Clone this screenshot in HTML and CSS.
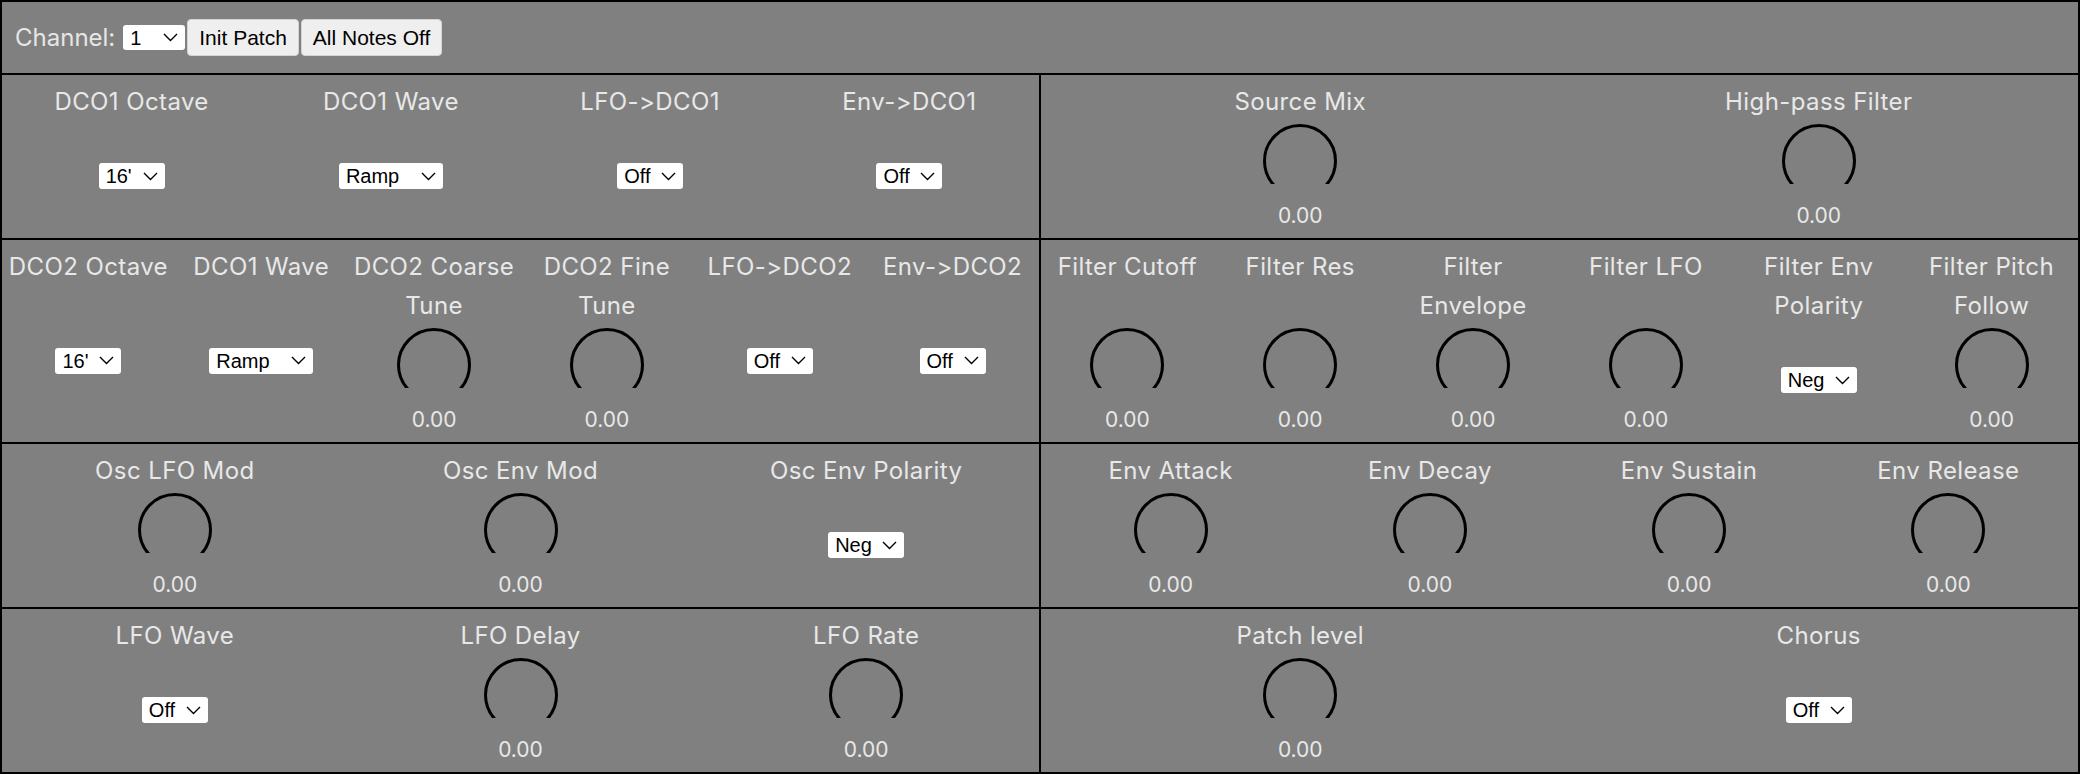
FILE: index.html
```html
<!DOCTYPE html>
<html lang="en">
<head>
    <meta charset="UTF-8">
    <meta name="viewport" content="width=device-width, initial-scale=1.0">
    <title>Synth Patch Editor</title>
    <link rel="stylesheet" href="styles.css">
</head>
<body>
    <div class="synth">
        <div class="topbar">
            <label for="channel">Channel:</label>
            <select id="channel" class="sel">
                <option>1</option><option>2</option><option>3</option><option>4</option>
                <option>5</option><option>6</option><option>7</option><option>8</option>
                <option>9</option><option>10</option><option>11</option><option>12</option>
                <option>13</option><option>14</option><option>15</option><option>16</option>
            </select>
            <button type="button" id="initPatch">Init Patch</button>
            <button type="button" id="allNotesOff">All Notes Off</button>
        </div>

        <div class="panels">
            <!-- row 1 -->
            <div class="section">
                <div class="control">
                    <div class="name">DCO1 Octave</div>
                    <select class="sel"><option>16'</option><option>8'</option><option>4'</option></select>
                    <span class="value"></span>
                </div>
                <div class="control">
                    <div class="name">DCO1 Wave</div>
                    <select class="sel"><option>Ramp</option><option>Pulse</option><option>Square</option></select>
                    <span class="value"></span>
                </div>
                <div class="control">
                    <div class="name">LFO-&gt;DCO1</div>
                    <select class="sel"><option>Off</option><option>On</option></select>
                    <span class="value"></span>
                </div>
                <div class="control">
                    <div class="name">Env-&gt;DCO1</div>
                    <select class="sel"><option>Off</option><option>On</option></select>
                    <span class="value"></span>
                </div>
            </div>
            <div class="section">
                <div class="control">
                    <div class="name">Source Mix</div>
                    <div class="knob-box">
                        <svg class="knob" viewBox="0 0 74 60"><circle cx="37" cy="37" r="35.5"/></svg>
                        <span class="value">0.00</span>
                    </div>
                </div>
                <div class="control">
                    <div class="name">High-pass Filter</div>
                    <div class="knob-box">
                        <svg class="knob" viewBox="0 0 74 60"><circle cx="37" cy="37" r="35.5"/></svg>
                        <span class="value">0.00</span>
                    </div>
                </div>
            </div>

            <!-- row 2 -->
            <div class="section">
                <div class="control">
                    <div class="name">DCO2 Octave</div>
                    <select class="sel"><option>16'</option><option>8'</option><option>4'</option></select>
                    <span class="value"></span>
                </div>
                <div class="control">
                    <div class="name">DCO1 Wave</div>
                    <select class="sel"><option>Ramp</option><option>Pulse</option><option>Square</option></select>
                    <span class="value"></span>
                </div>
                <div class="control">
                    <div class="name">DCO2 Coarse Tune</div>
                    <div class="knob-box">
                        <svg class="knob" viewBox="0 0 74 60"><circle cx="37" cy="37" r="35.5"/></svg>
                        <span class="value">0.00</span>
                    </div>
                </div>
                <div class="control">
                    <div class="name">DCO2 Fine Tune</div>
                    <div class="knob-box">
                        <svg class="knob" viewBox="0 0 74 60"><circle cx="37" cy="37" r="35.5"/></svg>
                        <span class="value">0.00</span>
                    </div>
                </div>
                <div class="control">
                    <div class="name">LFO-&gt;DCO2</div>
                    <select class="sel"><option>Off</option><option>On</option></select>
                    <span class="value"></span>
                </div>
                <div class="control">
                    <div class="name">Env-&gt;DCO2</div>
                    <select class="sel"><option>Off</option><option>On</option></select>
                    <span class="value"></span>
                </div>
            </div>
            <div class="section">
                <div class="control">
                    <div class="name">Filter Cutoff</div>
                    <div class="knob-box">
                        <svg class="knob" viewBox="0 0 74 60"><circle cx="37" cy="37" r="35.5"/></svg>
                        <span class="value">0.00</span>
                    </div>
                </div>
                <div class="control">
                    <div class="name">Filter Res</div>
                    <div class="knob-box">
                        <svg class="knob" viewBox="0 0 74 60"><circle cx="37" cy="37" r="35.5"/></svg>
                        <span class="value">0.00</span>
                    </div>
                </div>
                <div class="control">
                    <div class="name">Filter Envelope</div>
                    <div class="knob-box">
                        <svg class="knob" viewBox="0 0 74 60"><circle cx="37" cy="37" r="35.5"/></svg>
                        <span class="value">0.00</span>
                    </div>
                </div>
                <div class="control">
                    <div class="name">Filter LFO</div>
                    <div class="knob-box">
                        <svg class="knob" viewBox="0 0 74 60"><circle cx="37" cy="37" r="35.5"/></svg>
                        <span class="value">0.00</span>
                    </div>
                </div>
                <div class="control">
                    <div class="name">Filter Env Polarity</div>
                    <select class="sel"><option>Neg</option><option>Pos</option></select>
                    <span class="value"></span>
                </div>
                <div class="control">
                    <div class="name">Filter Pitch Follow</div>
                    <div class="knob-box">
                        <svg class="knob" viewBox="0 0 74 60"><circle cx="37" cy="37" r="35.5"/></svg>
                        <span class="value">0.00</span>
                    </div>
                </div>
            </div>

            <!-- row 3 -->
            <div class="section">
                <div class="control">
                    <div class="name">Osc LFO Mod</div>
                    <div class="knob-box">
                        <svg class="knob" viewBox="0 0 74 60"><circle cx="37" cy="37" r="35.5"/></svg>
                        <span class="value">0.00</span>
                    </div>
                </div>
                <div class="control">
                    <div class="name">Osc Env Mod</div>
                    <div class="knob-box">
                        <svg class="knob" viewBox="0 0 74 60"><circle cx="37" cy="37" r="35.5"/></svg>
                        <span class="value">0.00</span>
                    </div>
                </div>
                <div class="control">
                    <div class="name">Osc Env Polarity</div>
                    <select class="sel"><option>Neg</option><option>Pos</option></select>
                    <span class="value"></span>
                </div>
            </div>
            <div class="section">
                <div class="control">
                    <div class="name">Env Attack</div>
                    <div class="knob-box">
                        <svg class="knob" viewBox="0 0 74 60"><circle cx="37" cy="37" r="35.5"/></svg>
                        <span class="value">0.00</span>
                    </div>
                </div>
                <div class="control">
                    <div class="name">Env Decay</div>
                    <div class="knob-box">
                        <svg class="knob" viewBox="0 0 74 60"><circle cx="37" cy="37" r="35.5"/></svg>
                        <span class="value">0.00</span>
                    </div>
                </div>
                <div class="control">
                    <div class="name">Env Sustain</div>
                    <div class="knob-box">
                        <svg class="knob" viewBox="0 0 74 60"><circle cx="37" cy="37" r="35.5"/></svg>
                        <span class="value">0.00</span>
                    </div>
                </div>
                <div class="control">
                    <div class="name">Env Release</div>
                    <div class="knob-box">
                        <svg class="knob" viewBox="0 0 74 60"><circle cx="37" cy="37" r="35.5"/></svg>
                        <span class="value">0.00</span>
                    </div>
                </div>
            </div>

            <!-- row 4 -->
            <div class="section">
                <div class="control">
                    <div class="name">LFO Wave</div>
                    <select class="sel"><option>Off</option><option>Tri</option><option>Sq</option></select>
                    <span class="value"></span>
                </div>
                <div class="control">
                    <div class="name">LFO Delay</div>
                    <div class="knob-box">
                        <svg class="knob" viewBox="0 0 74 60"><circle cx="37" cy="37" r="35.5"/></svg>
                        <span class="value">0.00</span>
                    </div>
                </div>
                <div class="control">
                    <div class="name">LFO Rate</div>
                    <div class="knob-box">
                        <svg class="knob" viewBox="0 0 74 60"><circle cx="37" cy="37" r="35.5"/></svg>
                        <span class="value">0.00</span>
                    </div>
                </div>
            </div>
            <div class="section">
                <div class="control">
                    <div class="name">Patch level</div>
                    <div class="knob-box">
                        <svg class="knob" viewBox="0 0 74 60"><circle cx="37" cy="37" r="35.5"/></svg>
                        <span class="value">0.00</span>
                    </div>
                </div>
                <div class="control">
                    <div class="name">Chorus</div>
                    <select class="sel"><option>Off</option><option>I</option><option>II</option></select>
                    <span class="value"></span>
                </div>
            </div>
        </div>
    </div>
</body>
</html>
```

FILE: styles.css
```css
body {
    margin: 0;
    font-family: Inter, "Noto Sans", sans-serif;
    font-feature-settings: "calt" 0;
    font-variant-ligatures: none;
}
.synth {
    border: 2px solid #000;
    background-color: gray;
}
.topbar {
    height: 71px;
    display: flex;
    align-items: center;
    padding-left: 13px;
    border-bottom: 2px solid #000;
}
.topbar label {
    font-size: 24px;
    color: #e6e6e6;
    margin-right: 8px;
}
.topbar button {
    font: 21px "Liberation Sans", Arial, sans-serif;
    color: #000;
    height: 37px;
    padding: 0 11px;
    margin-left: 2px;
    background-color: #efefef;
    border: 1px solid #d4d4d4;
    border-radius: 4px;
    cursor: pointer;
}
.sel {
    -webkit-appearance: none;
    appearance: none;
    font: 20px "Liberation Sans", Arial, sans-serif;
    color: #000;
    height: 26px;
    padding: 0 32px 0 7px;
    border: none;
    border-radius: 3px;
    background: #fff url("data:image/svg+xml,%3Csvg xmlns='http://www.w3.org/2000/svg' width='15' height='9'%3E%3Cpath d='M1 1l6.5 6.5L14 1' fill='none' stroke='%23000' stroke-width='1.4'/%3E%3C/svg%3E") no-repeat right 7px center;
}
#channel {
    height: 25px;
}
.panels {
    display: grid;
    grid-template-columns: 1fr 1fr;
    gap: 2px;
    background-color: #000;
}
.section {
    display: flex;
    background-color: gray;
}
.control {
    flex: 1;
    min-width: 0;
    display: flex;
    flex-direction: column;
    align-items: center;
    justify-content: space-between;
    padding: 7px 6px 10px;
    text-align: center;
}
.name {
    font-size: 24px;
    letter-spacing: 0.4px;
    line-height: 39px;
    padding-bottom: 3px;
    color: #e8e8e8;
}
.knob-box {
    display: flex;
    flex-direction: column;
    align-items: center;
}
.knob {
    display: block;
    width: 74px;
    height: 60px;
    margin-bottom: 20px;
}
.knob circle {
    fill: none;
    stroke: #000;
    stroke-width: 3;
}
.value {
    font-size: 21px;
    line-height: 24px;
    color: #e8e8e8;
}
```
